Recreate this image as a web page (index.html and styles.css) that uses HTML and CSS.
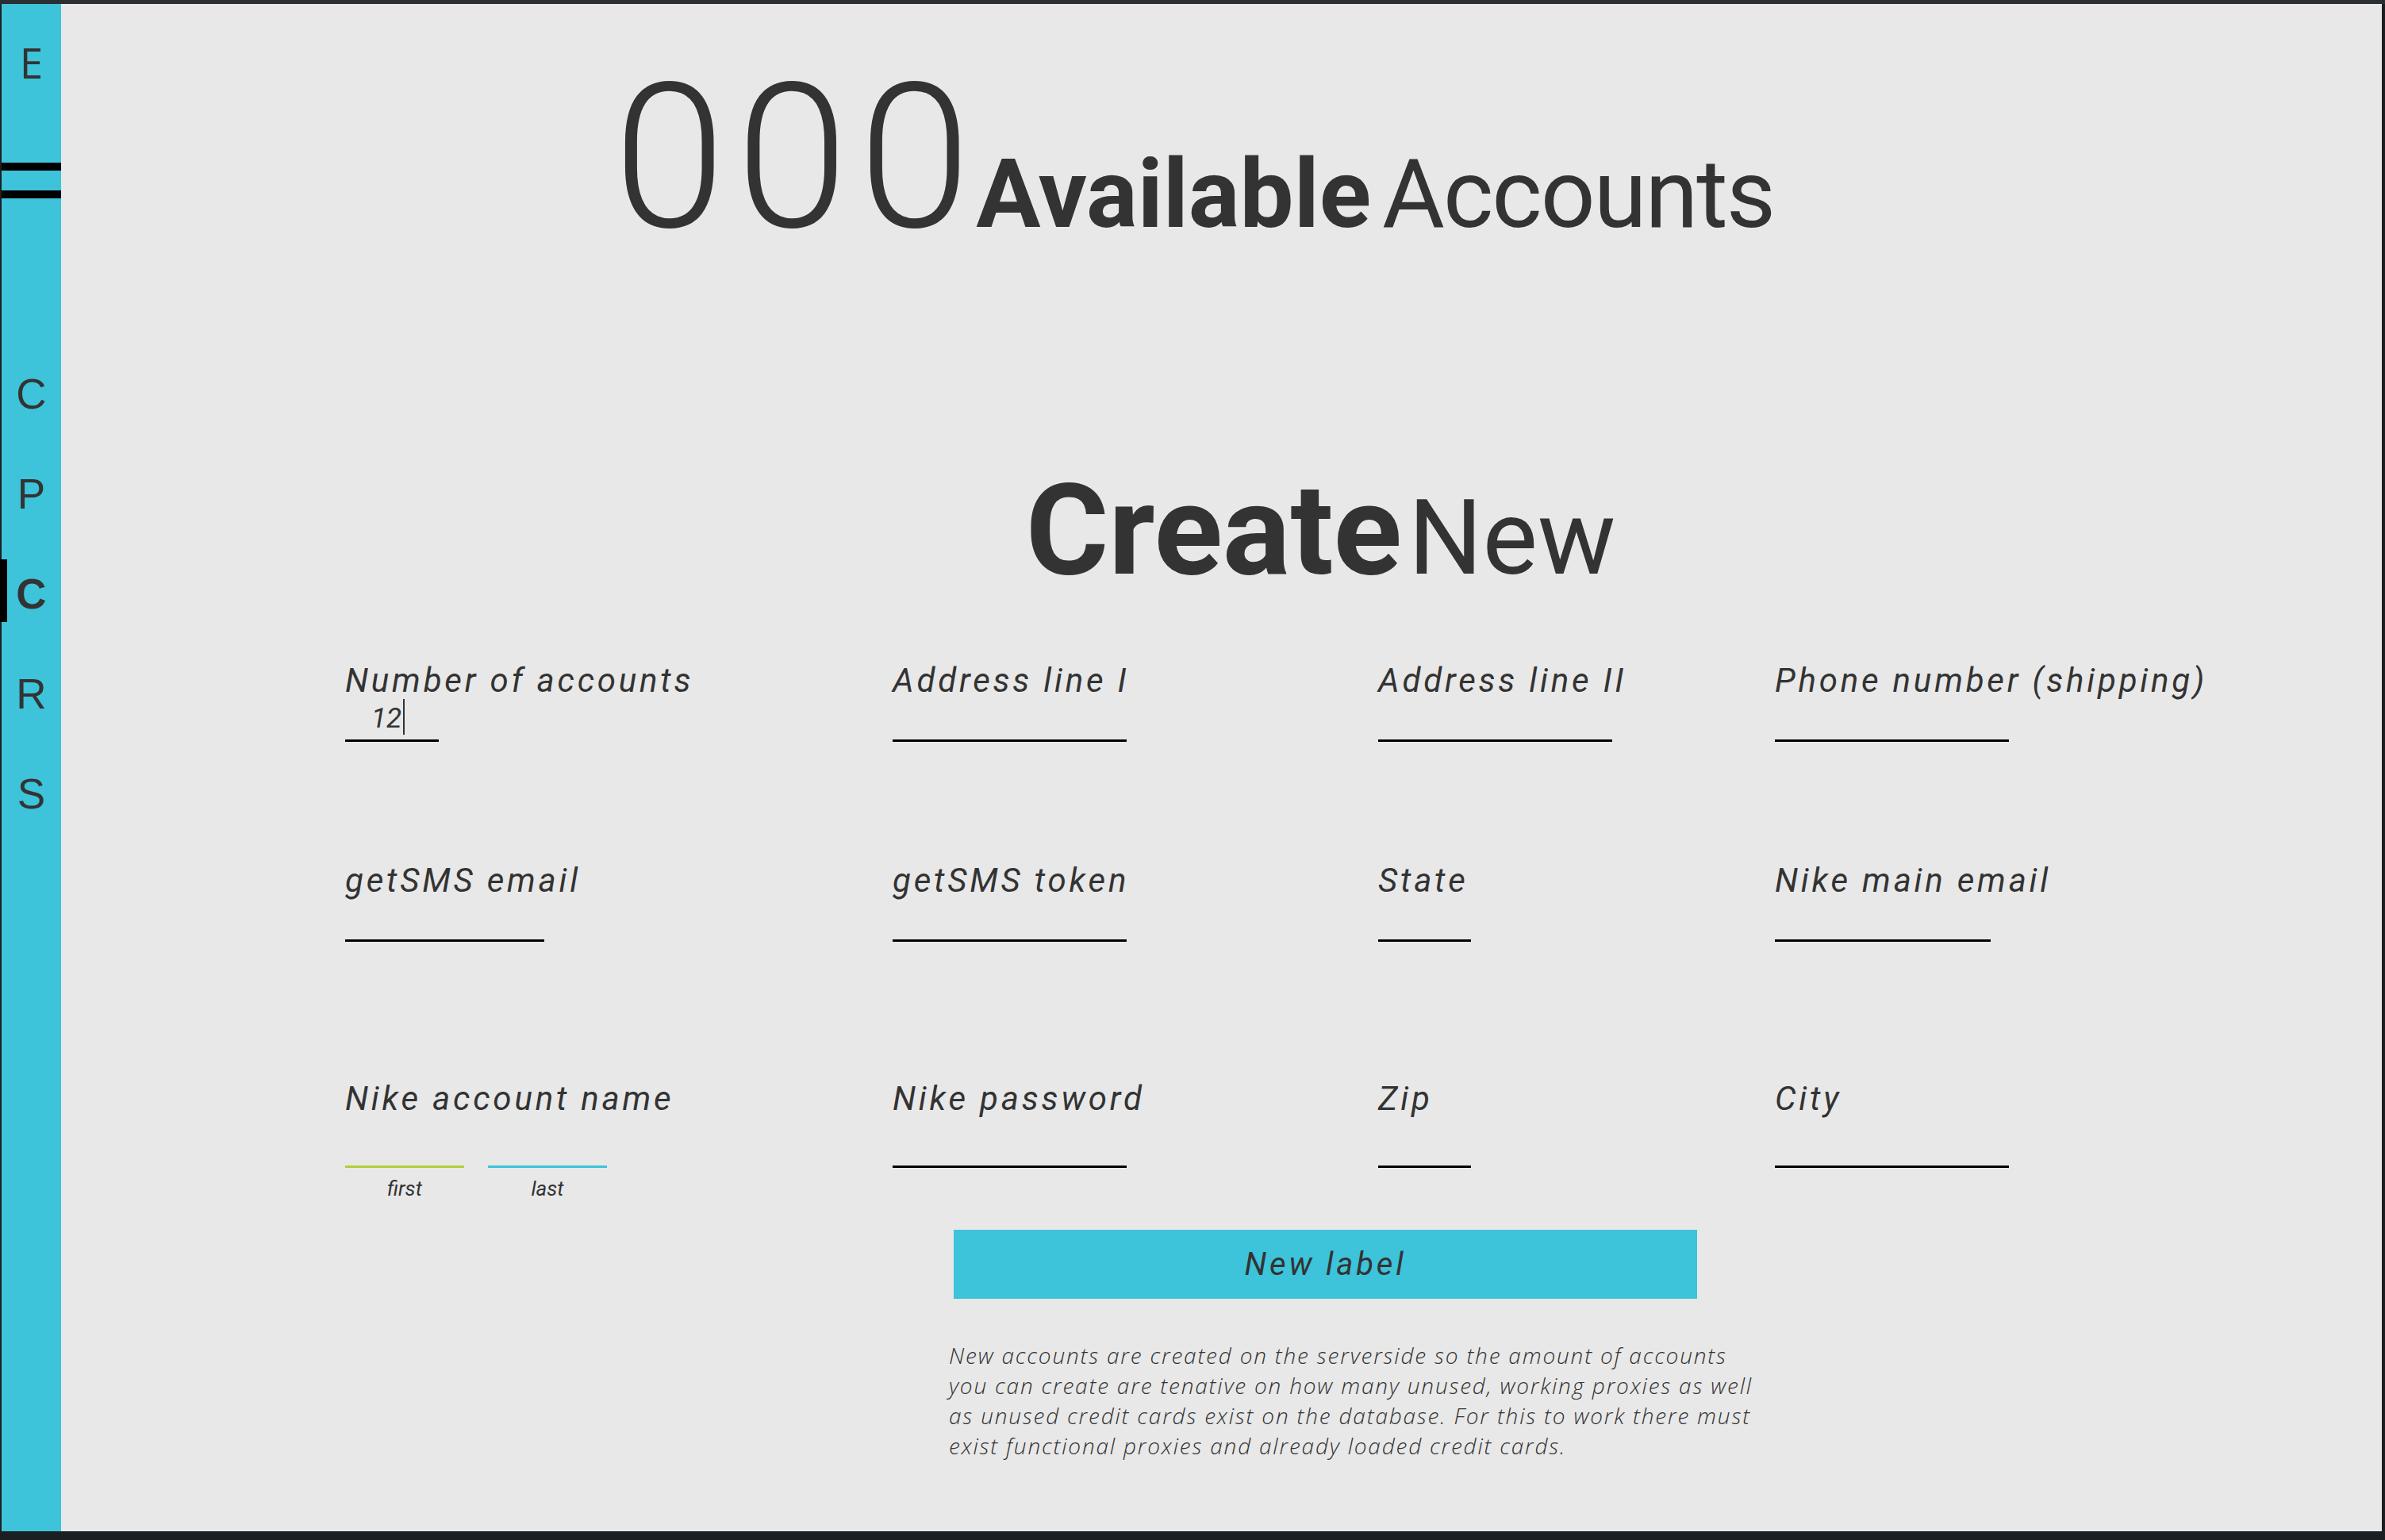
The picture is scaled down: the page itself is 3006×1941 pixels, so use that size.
FILE: index.html
```html
<!DOCTYPE html>
<html lang="en">
<head>
  <meta charset="UTF-8" />
  <title>Accounts</title>
  <link rel="stylesheet" href="styles.css">
</head>
<body>
  <div class="window">
    <nav class="sidebar">
      <div class="logo">E</div>
      <div class="bars">
        <div class="bar"></div>
        <div class="bar"></div>
      </div>
      <ul class="nav">
        <li>C</li>
        <li>P</li>
        <li class="active">C</li>
        <li>R</li>
        <li>S</li>
      </ul>
    </nav>

    <main class="main">
      <h1 class="hero"><span class="count">000</span><span class="strong">Available</span><span class="light">Accounts</span></h1>

      <div class="center-col">
        <h2 class="create"><span class="strong">Create</span><span class="light">New</span></h2>
      </div>

      <div class="form">
        <div class="row row-1">
          <div class="field">
            <label>Number of accounts</label>
            <div class="input w-118 filled">12<span class="caret"></span></div>
          </div>
          <div class="field">
            <label>Address line I</label>
            <div class="input w-295"></div>
          </div>
          <div class="field">
            <label>Address line II</label>
            <div class="input w-295"></div>
          </div>
          <div class="field">
            <label>Phone number (shipping)</label>
            <div class="input w-295"></div>
          </div>
        </div>

        <div class="row row-2">
          <div class="field">
            <label>getSMS email</label>
            <div class="input w-251"></div>
          </div>
          <div class="field">
            <label>getSMS token</label>
            <div class="input w-295"></div>
          </div>
          <div class="field">
            <label>State</label>
            <div class="input w-117"></div>
          </div>
          <div class="field">
            <label>Nike main email</label>
            <div class="input w-272"></div>
          </div>
        </div>

        <div class="row row-3">
          <div class="field">
            <label>Nike account name</label>
            <div class="name-pair">
              <div class="name-part">
                <div class="input tall first"></div>
                <span class="hint">first</span>
              </div>
              <div class="name-part">
                <div class="input tall last"></div>
                <span class="hint">last</span>
              </div>
            </div>
          </div>
          <div class="field">
            <label>Nike password</label>
            <div class="input tall w-295"></div>
          </div>
          <div class="field">
            <label>Zip</label>
            <div class="input tall w-117"></div>
          </div>
          <div class="field">
            <label>City</label>
            <div class="input tall w-295"></div>
          </div>
        </div>
      </div>

      <div class="center-col">
        <button class="submit">New label</button>
      </div>

      <p class="note">New accounts are created on the serverside so the amount of accounts<br>
        you can create are tenative on how many unused, working proxies as well<br>
        as unused credit cards exist on the database. For this to work there must<br>
        exist functional proxies and already loaded credit cards.</p>
    </main>
  </div>
</body>
</html>
```

FILE: styles.css
```css
html, body {
  margin: 0;
  padding: 0;
}

body {
  background: #1c1f21;
  border-top: 5px solid #2b2f33;
  padding: 0 4px 11px 2px;
  font-family: Roboto, "Liberation Sans", sans-serif;
  color: #333;
}

.window {
  display: flex;
  height: 1925px;
}

/* sidebar */
.sidebar {
  width: 75px;
  flex-shrink: 0;
  background: #3dc3da;
  position: relative;
}

.logo {
  font-family: "Open Sans", sans-serif;
  font-size: 53px;
  line-height: 53px;
  text-align: center;
  padding-top: 47px;
  color: #333;
}

.bars {
  margin-top: 100px;
}

.bar {
  height: 10px;
  background: #000;
}

.bar + .bar {
  margin-top: 25px;
}

.nav {
  list-style: none;
  margin: 184px 0 0;
  padding: 0;
}

.nav li {
  height: 126px;
  line-height: 126px;
  text-align: center;
  font-family: "Liberation Sans", Arial, sans-serif;
  font-size: 53px;
  color: #333;
  position: relative;
}

.nav li.active {
  font-weight: bold;
}

.nav li.active::before {
  content: "";
  position: absolute;
  left: -2px;
  top: 19px;
  width: 9px;
  height: 79px;
  background: #000;
}

/* main area */
.main {
  flex: 1;
  background: #e8e8e8;
  padding-top: 66px;
}

.hero {
  display: flex;
  align-items: baseline;
  margin: 0 0 0 696px;
  font-weight: normal;
}

.hero span, .create span {
  line-height: 1;
}

.hero .count {
  font-size: 255px;
  font-weight: 300;
  letter-spacing: 13px;
}

.hero .strong {
  font-size: 121px;
  font-weight: bold;
  margin-left: -6px;
}

.hero .light {
  font-size: 121px;
  font-weight: normal;
  letter-spacing: -2px;
  margin-left: 14px;
}

.center-col {
  margin-left: 1125px;
  width: 937px;
  display: flex;
  justify-content: center;
}

.create {
  display: flex;
  align-items: baseline;
  margin: 263px 12px 0 0;
  font-weight: normal;
}

.create .strong {
  font-size: 160px;
  font-weight: bold;
}

.create .light {
  font-size: 131px;
  margin-left: 8px;
}

/* form */
.form {
  margin-left: 358px;
  margin-top: 88px;
}

.row {
  display: grid;
  grid-template-columns: 690px 612px 500px 1fr;
  align-items: start;
}

.row-2 { margin-top: 154px; }
.row-3 { margin-top: 177px; }

.field label {
  display: block;
  font-size: 42px;
  line-height: 42px;
  font-style: italic;
  letter-spacing: 3.8px;
  white-space: nowrap;
}

.input {
  height: 53px;
  border-bottom: 3px solid #000;
  box-sizing: content-box;
  font-size: 35px;
  line-height: 53px;
  font-style: italic;
}

.input.tall {
  height: 63px;
}

.input.filled {
  padding-left: 33px;
  width: 85px;
}

.caret {
  display: inline-block;
  width: 2px;
  height: 45px;
  background: #333;
  vertical-align: -9px;
  margin-left: 2px;
}

.w-117 { width: 117px; }
.w-251 { width: 251px; }
.w-272 { width: 272px; }
.w-295 { width: 295px; }

.name-pair {
  display: flex;
  gap: 30px;
}

.name-part {
  width: 150px;
  text-align: center;
}

.input.first { border-bottom-color: #b1cf3a; }
.input.last { border-bottom-color: #3dc3da; }

.hint {
  display: block;
  margin-top: 11px;
  font-size: 26px;
  line-height: 30px;
  font-style: italic;
}

/* action */
.submit {
  margin-top: 37px;
  width: 937px;
  height: 87px;
  border: none;
  background: #3dc3da;
  color: #333;
  font-family: Roboto, sans-serif;
  font-size: 40px;
  font-style: italic;
  letter-spacing: 3.8px;
  padding: 0;
}

.note {
  margin: 52px 0 0 1119px;
  font-family: "Open Sans", sans-serif;
  font-size: 28px;
  font-style: italic;
  font-weight: 300;
  letter-spacing: 1.8px;
  line-height: 38px;
  white-space: nowrap;
}
```
